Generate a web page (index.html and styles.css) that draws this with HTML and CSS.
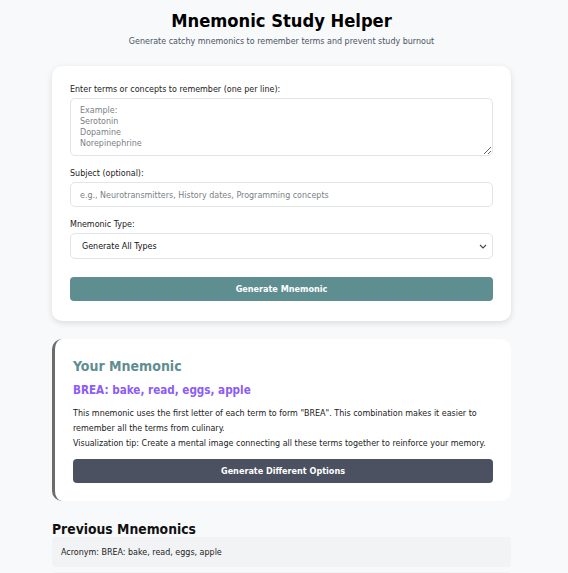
FILE: index.html
```html
<!DOCTYPE html>
<html lang="en">
<head>
    <meta charset="UTF-8">
    <meta name="viewport" content="width=device-width, initial-scale=1.0">
    <title>Mnemonic Study Helper</title>
    <link rel="stylesheet" href="styles.css">
</head>
<body>
    <div class="app">
        <header class="header">
            <h1>Mnemonic Study Helper</h1>
            <p class="subtitle">Generate catchy mnemonics to remember terms and prevent study burnout</p>
        </header>

        <div class="card form-card">
            <div class="input-group">
                <label for="terms">Enter terms or concepts to remember (one per line):</label>
                <textarea id="terms" placeholder="Example:&#10;Serotonin&#10;Dopamine&#10;Norepinephrine"></textarea>
            </div>

            <div class="input-group">
                <label for="subject">Subject (optional):</label>
                <input type="text" id="subject" placeholder="e.g., Neurotransmitters, History dates, Programming concepts">
            </div>

            <div class="input-group">
                <label for="mnemonicType">Mnemonic Type:</label>
                <div class="select-wrap">
                    <select id="mnemonicType">
                        <option>Generate All Types</option>
                        <option>Acronym</option>
                        <option>Acrostic</option>
                        <option>Rhyme</option>
                    </select>
                    <svg class="chevron" width="8" height="5" viewBox="0 0 8 5"><path d="M1 1l3 3 3-3" fill="none" stroke="#444" stroke-width="1.1"/></svg>
                </div>
            </div>

            <button class="btn btn-primary">Generate Mnemonic</button>
        </div>

        <div class="card result-card">
            <h2>Your Mnemonic</h2>
            <div class="mnemonic">BREA: bake, read, eggs, apple</div>
            <p class="explain">This mnemonic uses the first letter of each term to form "BREA". This combination makes it easier to remember all the terms from culinary.<br>Visualization tip: Create a mental image connecting all these terms together to reinforce your memory.</p>
            <button class="btn btn-dark">Generate Different Options</button>
        </div>

        <h2 class="history-title">Previous Mnemonics</h2>
        <div class="history-item">Acronym: BREA: bake, read, eggs, apple</div>
        <div class="history-item">Acrostic: Big Rabbits Eat Apples</div>
    </div>
</body>
</html>
```

FILE: styles.css
```css
body {
    margin: 0;
    padding: 10px 57px 0 52px;
    background-color: #f8f9fb;
    font-family: "DejaVu Sans Condensed", "DejaVu Sans", sans-serif;
    color: #1f2328;
}
.header {
    text-align: center;
    margin-bottom: 20px;
}
h1 {
    font-size: 18.2px;
    margin: 0 0 5px;
    color: #000;
}
.subtitle {
    font-size: 8.9px;
    color: #4b5563;
    margin: 0;
}
.card {
    background-color: #fff;
    border-radius: 10px;
}
.form-card {
    padding: 18px 18px 20px;
    box-shadow: 0 2px 6px rgba(0, 0, 0, 0.12);
    margin-bottom: 18px;
}
.input-group {
    margin-bottom: 12px;
}
label {
    display: block;
    font-size: 8.9px;
    margin-bottom: 4px;
    color: #222;
}
textarea, input[type="text"], select {
    box-sizing: border-box;
    width: 100%;
    border: 1px solid #e2e4e8;
    border-radius: 5px;
    font-family: inherit;
    font-size: 8.9px;
    background: #fff;
}
textarea {
    height: 58px;
    padding: 6px 9px;
    line-height: 11px;
    resize: vertical;
    display: block;
}
input[type="text"] {
    height: 25px;
    padding: 0 9px;
    display: block;
}
::placeholder {
    color: #7b7f86;
}
.select-wrap {
    position: relative;
}
select {
    height: 26px;
    padding: 0 11px;
    appearance: none;
    color: #111;
    display: block;
}
.chevron {
    position: absolute;
    right: 6px;
    top: 11px;
    pointer-events: none;
}
.btn {
    display: block;
    width: 100%;
    height: 24px;
    border: none;
    border-radius: 4px;
    color: #fff;
    font-family: inherit;
    font-weight: bold;
    font-size: 9px;
    cursor: pointer;
}
.btn-primary {
    margin-top: 18px;
    background-color: #5f8e91;
}
.btn-dark {
    background-color: #4b5161;
}
.result-card {
    border-left: 3px solid #6b6b6b;
    padding: 19px 18px 18px 18px;
    margin-bottom: 20px;
}
.result-card h2 {
    font-size: 14px;
    color: #5f8e91;
    margin: 0 0 9px;
}
.mnemonic {
    font-size: 11.6px;
    font-weight: bold;
    color: #8b5cf6;
    margin-bottom: 9px;
}
.explain {
    font-size: 8.9px;
    line-height: 15px;
    margin: 0 0 8px;
    color: #222;
}
.history-title {
    font-size: 13.8px;
    margin: 0;
    color: #111;
}
.history-item {
    background-color: #f2f3f5;
    border-radius: 4px;
    padding: 10px 9px;
    font-size: 8.9px;
    margin-bottom: 5px;
    color: #222;
}
```
